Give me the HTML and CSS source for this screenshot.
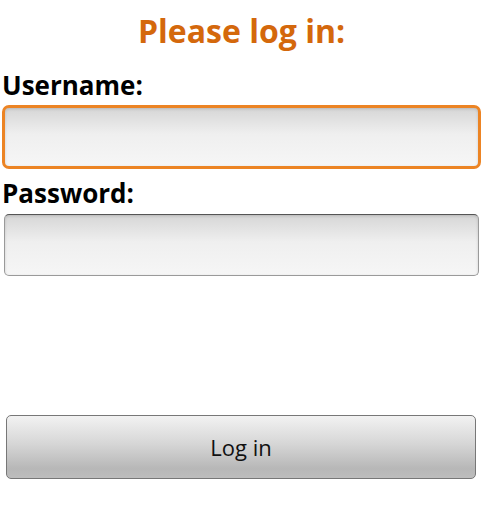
FILE: index.html
```html
<!DOCTYPE HTML><html>
<head>
  <title>Log in</title>
  <meta name="viewport" content="width=device-width, initial-scale=1">
  <link rel="stylesheet" href="styles.css">
</head>
<body>
  <h1 class="title">Please log in:</h1>
  <form class="login">
    <label class="label first" for="username">Username:</label>
    <input id="username" class="field focused" type="text">
    <label class="label" for="password">Password:</label>
    <input id="password" class="field" type="password">
    <div class="actions">
      <button type="button" class="button">Log in</button>
    </div>
  </form>
</body>
</html>
```
FILE: styles.css
```css
html {
  font-family: "Open Sans", "DejaVu Sans", sans-serif;
}
body {
  margin: 0;
  background: #fff;
}
.title {
  margin: 0;
  padding-top: 9px;
  text-align: center;
  font-size: 32px;
  font-weight: bold;
  color: #d4680c;
  line-height: 44px;
}
.login {
  display: flex;
  flex-direction: column;
}
.label {
  font-size: 26px;
  font-weight: bold;
  color: #000;
  line-height: 30px;
  padding-left: 2px;
  margin-top: 9px;
}
.label.first {
  margin-top: 17px;
}
.field {
  box-sizing: border-box;
  height: 62px;
  margin: 6px 4px 0 4px;
  border: 1px solid #9a9a9a;
  border-top-color: #555;
  border-radius: 5px;
  background: linear-gradient(#d6d6d6, #efefef 45%, #f6f6f6);
  box-shadow: inset 0 1px 3px rgba(0,0,0,.15);
  outline: none;
}
.field.focused {
  height: 64px;
  margin: 5px 2px 0 2px;
  border: 3px solid #ec8424;
  border-radius: 7px;
}
.actions {
  padding: 139px 7px 0 6px;
}
.button {
  box-sizing: border-box;
  width: 100%;
  height: 64px;
  font-family: "Open Sans", "DejaVu Sans", sans-serif;
  font-size: 22px;
  color: #111;
  border: 1px solid #777;
  border-radius: 5px;
  background: linear-gradient(#f2f2f2, #d6d6d6 45%, #b7b7b7 85%, #bdbdbd);
}
```
